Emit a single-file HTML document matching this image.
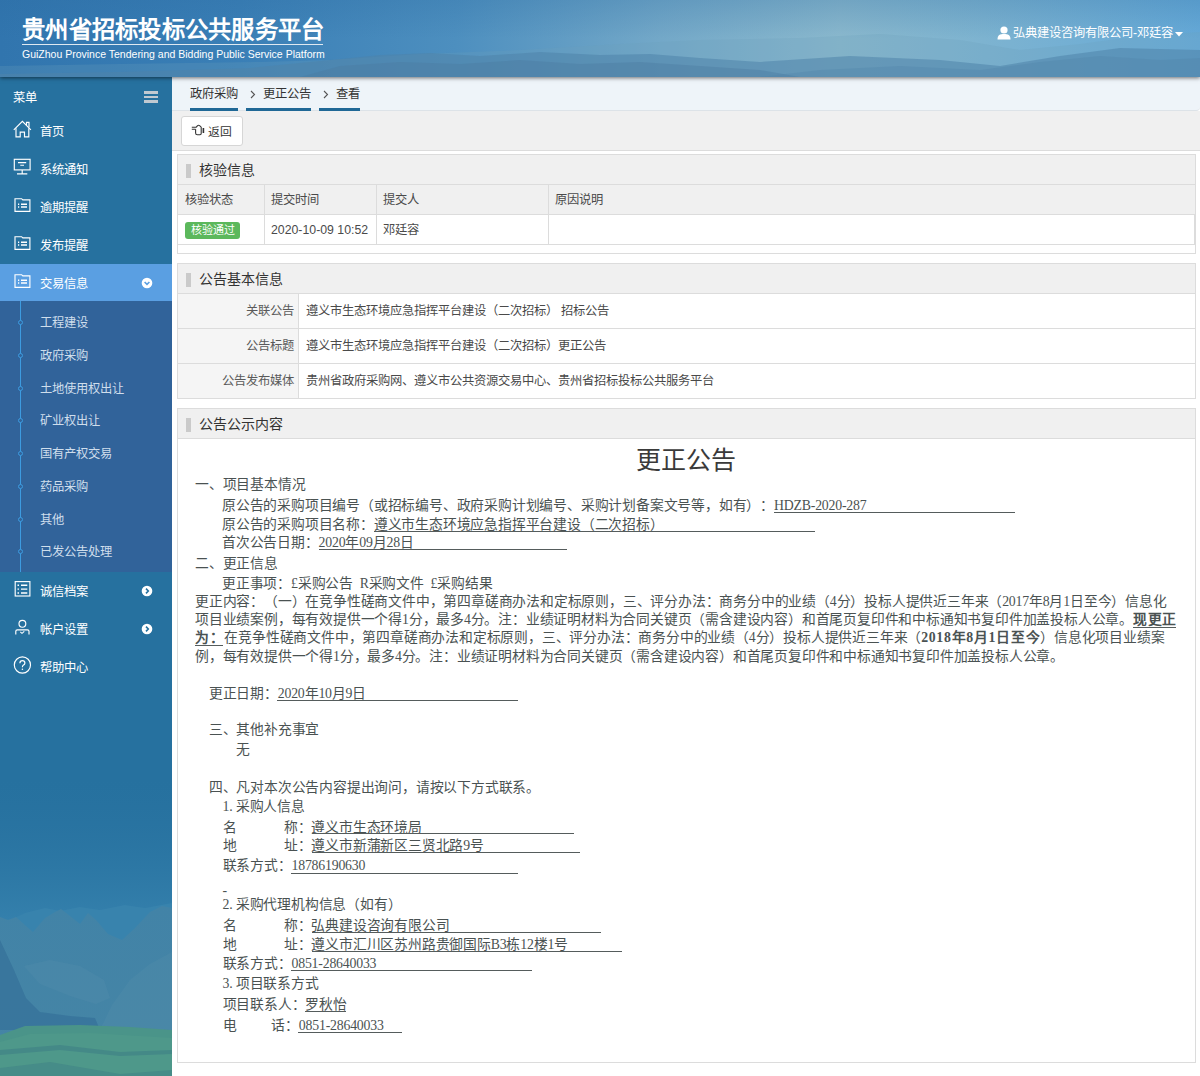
<!DOCTYPE html><html lang="zh-CN"><head><meta charset="utf-8">
<style>
*{margin:0;padding:0;box-sizing:border-box}
html,body{width:1200px;height:1076px;overflow:hidden;background:#fff;font-family:"Liberation Sans",sans-serif;text-spacing-trim:space-all;}
.a{position:absolute;white-space:nowrap}
#hdr{position:absolute;left:0;top:0;width:1200px;height:77px;z-index:5;box-shadow:0 1px 4px rgba(0,0,0,0.55);
 background:linear-gradient(90deg,#2f78b4 0%,#3a80b8 22%,#6aa2c4 42%,#86b5cb 58%,#8fbacd 63%,#74acd0 80%,#62a4d4 100%);}
#hdr .ttl{left:22px;top:15px;color:#fff;font-size:23.3px;letter-spacing:0.25px;font-weight:bold;line-height:30px}
#hdr .line{position:absolute;left:22px;top:44px;width:301px;height:1px;background:#dfe9f1}
#hdr .sub{left:22px;top:47px;color:#fff;font-size:10.5px;line-height:14px}
#hdr .user{left:1013px;top:25px;color:#fff;font-size:12.3px;line-height:17px}
#side{position:absolute;left:0;top:77px;width:172px;height:999px;background:#26719f;overflow:hidden}
#side .t{position:absolute;color:#fff;font-size:12.3px;line-height:16px;white-space:nowrap;margin-top:1.5px}
#side .ic{position:absolute;left:14px;width:17px;height:17px}
#sub{position:absolute;left:0;top:224px;width:172px;height:271px;background:#31639a}
#sub .vl{position:absolute;left:20px;top:0;width:1px;height:271px;background:#3d9be0}
#sub .dot{position:absolute;left:18px;width:5px;height:5px;margin-top:1px;border:1px solid #3d9be0;border-radius:50%;background:#31639a}
#sub .t{color:#cfdeec;font-size:12.3px;left:40px;margin-top:0.5px}
.arr{position:absolute;left:141px;width:11px;height:11px;border-radius:50%;background:#fff}
#main{position:absolute;left:172px;top:77px;width:1028px;height:999px;background:#fff}
#bc{position:absolute;left:0;top:0;width:1028px;height:34px;background:#eef4f9;border-bottom:1px solid #dde3e8;border-bottom-right-radius:4px}
#bc .t{position:absolute;top:9px;font-size:12.3px;line-height:17px;color:#333;white-space:nowrap}
#bc .u{position:absolute;top:31px;height:3px;background:#1f6896}
#tb{position:absolute;left:0;top:34px;width:1028px;height:40px;background:#f0f0f0;border-bottom:1px solid #dcdcdc}
.btn{position:absolute;left:9px;top:5px;width:62px;height:30px;background:#fff;border:1px solid #d6d6d6;border-radius:3px}
.panel{position:absolute;left:5px;width:1019px;border:1px solid #dcdcdc;background:#fff}
.ph{position:absolute;left:0;top:0;width:1017px;height:30px;background:#f0f0f0;border-bottom:1px solid #dcdcdc;font-size:14px;color:#333}
.ph:before{content:"";position:absolute;left:8px;top:9px;width:5px;height:14px;background:#cacaca}
.ph span{position:absolute;left:21px;top:6px;line-height:18px;white-space:nowrap}
.cell{position:absolute;font-size:12.3px;line-height:16px;color:#4a4a4a;white-space:nowrap}
#ct{position:absolute;left:0;top:0;width:1200px;height:1076px;font-family:"Liberation Sans",sans-serif;color:#4a5252;font-size:13.8px;line-height:18px}
#ct .a{position:absolute;white-space:nowrap}
#ct .l{font-size:13.8px;line-height:18px;letter-spacing:-0.2px}
#ct b{font-weight:bold;letter-spacing:0.7px}
#ct .s{font-family:"Liberation Serif",serif}
</style></head><body>
<div id="hdr">
 <svg class="a" style="left:0;top:0" width="1200" height="77" viewBox="0 0 1200 77">
  <defs>
   <linearGradient id="hg" x1="0" y1="0" x2="1" y2="0">
    <stop offset="0" stop-color="#3175ae"></stop><stop offset="0.2" stop-color="#3a7fb6"></stop><stop offset="0.38" stop-color="#4d8fbf"></stop>
    <stop offset="0.55" stop-color="#73a8c8"></stop><stop offset="0.7" stop-color="#8ab8cd"></stop><stop offset="0.82" stop-color="#7db3d0"></stop><stop offset="1" stop-color="#66aad8"></stop>
   </linearGradient>
   <linearGradient id="hv" x1="0" y1="0" x2="0" y2="1"><stop offset="0" stop-color="#2a6aa0" stop-opacity="0.25"></stop><stop offset="0.5" stop-color="#2a6aa0" stop-opacity="0"></stop></linearGradient>
  </defs>
  <rect width="1200" height="77" fill="url(#hg)"></rect>
  <rect width="1200" height="77" fill="url(#hv)"></rect>
  <path d="M0 77 V66 L120 64 L260 62 L330 60 L420 54 L520 50 L620 44 L700 40 L800 38 L880 34 L960 40 L1020 50 L1080 44 L1140 36 L1200 32 V77Z" fill="#6a9fbd" opacity="0.25"></path>
  <path d="M0 77 V74 L120 72 L250 68 L330 60 L380 55 L430 53 L480 56 L540 52 L600 55 L650 54 L700 58 L760 62 L850 56 L940 60 L1000 66 L1060 56 L1120 48 L1200 50 V77Z" fill="#4f84a9" opacity="0.55"></path>
  <path d="M300 77 L340 66 L400 62 L460 64 L520 60 L580 64 L640 62 L700 66 L760 70 L800 77Z" fill="#4a7b9f" opacity="0.4"></path>
  <path d="M760 77 L820 70 L900 66 L980 70 L1040 62 L1100 56 L1160 60 L1200 58 V77Z" fill="#4f84a9" opacity="0.35"></path>
 </svg>
 <div class="a ttl" style="width: 302.25px; text-align-last: justify;">贵州省招标投标公共服务平台</div>
 <div class="line"></div>
 <div class="a sub">GuiZhou Province Tendering and Bidding Public Service Platform</div>
 <svg class="a" style="left:997px;top:26px" width="14" height="14" viewBox="0 0 14 14"><circle cx="7" cy="4" r="3.6" fill="#fff"></circle><path d="M0.5 13.5 C0.5 9 3 8 7 8 C11 8 13.5 9 13.5 13.5Z" fill="#fff"></path></svg>
 <div class="a user" style="width: 160.109px; text-align-last: justify;">弘典建设咨询有限公司-邓廷容</div>
 <svg class="a" style="left:1175px;top:32px" width="8" height="5" viewBox="0 0 8 5"><path d="M0 0H8L4 4.5Z" fill="#fff"></path></svg>
</div>
<div id="side">
<svg class="a" style="left:0;top:703px" width="172" height="296" viewBox="0 0 172 296">
  <defs>
   <linearGradient id="hz" x1="0" y1="0" x2="0" y2="1"><stop offset="0" stop-color="#2a74a2" stop-opacity="0"></stop><stop offset="1" stop-color="#3581ad" stop-opacity="1"></stop></linearGradient>
   <linearGradient id="mt" x1="0" y1="0" x2="0" y2="1"><stop offset="0" stop-color="#4283a7"></stop><stop offset="1" stop-color="#4585a5"></stop></linearGradient>
  </defs>
  <rect x="0" y="0" width="172" height="145" fill="url(#hz)"></rect>
  <rect x="0" y="145" width="172" height="151" fill="#3581ad"></rect>
  <path d="M0 145 L10 140 L25 133 L45 128 L60 131 L80 127 L100 130 L125 125 L145 128 L172 123 V296 H0Z" fill="#3883ad"></path>
  <path d="M0 137 L8 140 L16 137 L26 146 L33 152 L45 138 L55 132 L61 129 L70 136 L80 144 L88 133 L96 140 L108 154 L122 160 L135 148 L150 132 L162 126 L172 128 V296 H0Z" fill="url(#mt)"></path>
  <path d="M0 160 L14 190 L26 218 L40 232 L70 236 L95 238 L100 250 H0Z" fill="#36729a" opacity="0.75"></path>
  <path d="M24 186 L40 204 L70 216 L96 224 L110 218 L104 200 L80 186 L50 180Z" fill="#5590ab" opacity="0.3"></path>
  <path d="M100 250 L112 225 L130 200 L150 184 L172 172 V250Z" fill="#5590ab" opacity="0.28"></path>
  <path d="M0 255 L25 246 L80 245 L130 247 L172 250 V296 H0Z" fill="#4a9489"></path>
  <path d="M0 296 L0 262 L30 254 L90 253 L172 258 V296Z" fill="#4e988a"></path>
  <path d="M0 270 L60 265 L120 272 L172 270 V274 L120 276 L60 270 L0 275Z" fill="#3d7f86" opacity="0.6"></path>
  <path d="M0 288 L50 282 L120 294 L172 290 V296 H0Z" fill="#3d7f86" opacity="0.5"></path>
 </svg>
 <div class="t" style="left: 13px; top: 11px; width: 24px; text-align-last: justify;">菜单</div>
 <div class="a" style="left:144px;top:14.2px;width:14px;height:2.6px;background:#c0c9d1"></div>
 <div class="a" style="left:144px;top:18.8px;width:14px;height:2.4px;background:#c0c9d1"></div>
 <div class="a" style="left:144px;top:23px;width:14px;height:2.6px;background:#c0c9d1"></div>

 <div class="a" style="left:0;top:187px;width:172px;height:37px;background:#5a9fe2"></div>
 <svg class="a" style="left:12px;top:43px" width="20" height="18" viewBox="0 0 20 18"><path d="M1.8 9.8 L10.4 1.4 L18.9 9.8" stroke="#fff" stroke-width="1.15" fill="none"></path><path d="M14.5 5.2 V2.3 H17 V7.6" stroke="#fff" stroke-width="1.15" fill="none"></path><path d="M4 8.3 V16.9 H8.2 V12.1 H12.5 V16.9 H16.8 V8.3" stroke="#fff" stroke-width="1.15" fill="none"></path></svg>
 <svg class="a" style="left:13px;top:81px" width="18" height="17" viewBox="0 0 18 17"><rect x="1.3" y="1.3" width="15.8" height="10.6" stroke="#fff" stroke-width="1.15" fill="none"></rect><path d="M5 4.6 H13.2 M7.3 7.2 H11" stroke="#fff" stroke-width="1.15" fill="none"></path><path d="M9.2 12 V15.6 M4 15.8 H14.3" stroke="#fff" stroke-width="1.15" fill="none"></path></svg>
 <svg class="a" style="left:13px;top:120px" width="18" height="16" viewBox="0 0 18 16"><path d="M2 14.3 V1.7 H8.6 L9.8 2.9 H16.9 V14.3 Z" stroke="#fff" stroke-width="1.15" fill="none"></path><path d="M5 7.3 H6.2 M5 10 H6.2 M8 7.3 H14 M8 10 H14" stroke="#fff" stroke-width="1.5"></path></svg>
 <svg class="a" style="left:13px;top:158px" width="18" height="16" viewBox="0 0 18 16"><path d="M2 14.3 V1.7 H8.6 L9.8 2.9 H16.9 V14.3 Z" stroke="#fff" stroke-width="1.15" fill="none"></path><path d="M5 7.3 H6.2 M5 10 H6.2 M8 7.3 H14 M8 10 H14" stroke="#fff" stroke-width="1.5"></path></svg>
 <svg class="a" style="left:13px;top:196px" width="18" height="16" viewBox="0 0 18 16"><path d="M2 14.3 V1.7 H8.6 L9.8 2.9 H16.9 V14.3 Z" stroke="#fff" stroke-width="1.15" fill="none"></path><path d="M5 7.3 H6.2 M5 10 H6.2 M8 7.3 H14 M8 10 H14" stroke="#fff" stroke-width="1.5"></path></svg>
 <svg class="a" style="left:13px;top:503px" width="18" height="17" viewBox="0 0 18 17"><rect x="2.2" y="1.6" width="14.7" height="14.4" stroke="#fff" stroke-width="1.15" fill="none"></rect><path d="M4.5 5.2 H6 M4.5 9.1 H6 M4.5 13 H6 M8 5.2 H14.3 M8 9.1 H14.3 M8 13 H14.3" stroke="#fff" stroke-width="1.4"></path></svg>
 <svg class="a" style="left:13px;top:541px" width="18" height="18" viewBox="0 0 18 18"><circle cx="9.4" cy="5.8" r="3.4" stroke="#fff" stroke-width="1.15" fill="none"></circle><path d="M2.8 16.5 V13.3 Q2.8 11.8 4.3 11.8 H14.5 Q16 11.8 16 13.3 V16.5" stroke="#fff" stroke-width="1.15" fill="none"></path><path d="M7.3 13.8 L9 15.3 L11.3 13.3" stroke="#fff" stroke-width="1.1" fill="none"></path></svg>
 <svg class="a" style="left:13px;top:579px" width="19" height="19" viewBox="0 0 19 19"><circle cx="9.4" cy="9" r="8.1" stroke="#fff" stroke-width="1.15" fill="none"></circle><path d="M6.9 7.2 Q6.9 4.6 9.4 4.6 Q11.9 4.6 11.9 6.9 Q11.9 8.4 10.2 9.3 Q9.4 9.8 9.4 11.2" stroke="#fff" stroke-width="1.2" fill="none"></path><circle cx="9.4" cy="13.3" r="0.8" fill="#fff"></circle></svg>
 <div class="t" style="left: 40px; top: 45px; width: 24px; text-align-last: justify;">首页</div>
 <div class="t" style="left: 40px; top: 83px; width: 48px; text-align-last: justify;">系统通知</div>
 <div class="t" style="left: 40px; top: 121px; width: 48px; text-align-last: justify;">逾期提醒</div>
 <div class="t" style="left: 40px; top: 159px; width: 48px; text-align-last: justify;">发布提醒</div>
 <div class="t" style="left: 40px; top: 197px; width: 48px; text-align-last: justify;">交易信息</div>
 <svg class="a" style="left:141px;top:200px" width="12" height="12" viewBox="0 0 12 12"><circle cx="6" cy="6" r="5.3" fill="#fff"></circle><path d="M3.6 5 L6 7.3 L8.4 5" stroke="#5a9fe2" stroke-width="1.6" fill="none"></path></svg>
 <div id="sub">
  <div class="vl"></div>
  <div class="dot" style="top:17.8px"></div>
  <div class="t" style="top: 13.3px; width: 48px; text-align-last: justify;">工程建设</div>
  <div class="dot" style="top:50.9px"></div>
  <div class="t" style="top: 46.4px; width: 48px; text-align-last: justify;">政府采购</div>
  <div class="dot" style="top:83.8px"></div>
  <div class="t" style="top: 79.3px; width: 84px; text-align-last: justify;">土地使用权出让</div>
  <div class="dot" style="top:116.3px"></div>
  <div class="t" style="top: 111.8px; width: 60px; text-align-last: justify;">矿业权出让</div>
  <div class="dot" style="top:148.8px"></div>
  <div class="t" style="top: 144.3px; width: 72px; text-align-last: justify;">国有产权交易</div>
  <div class="dot" style="top:181.5px"></div>
  <div class="t" style="top: 177px; width: 48px; text-align-last: justify;">药品采购</div>
  <div class="dot" style="top:214.6px"></div>
  <div class="t" style="top: 210.1px; width: 24px; text-align-last: justify;">其他</div>
  <div class="dot" style="top:247.3px"></div>
  <div class="t" style="top: 242.8px; width: 72px; text-align-last: justify;">已发公告处理</div>
 </div>
 <div class="t" style="left: 40px; top: 505px; width: 48px; text-align-last: justify;">诚信档案</div>
 <svg class="a" style="left:141px;top:508px" width="12" height="12" viewBox="0 0 12 12"><circle cx="6" cy="6" r="5.3" fill="#fff"></circle><path d="M5 3.6 L7.3 6 L5 8.4" stroke="#26719f" stroke-width="1.6" fill="none"></path></svg>
 <div class="t" style="left: 40px; top: 543px; width: 48px; text-align-last: justify;">帐户设置</div>
 <svg class="a" style="left:141px;top:546px" width="12" height="12" viewBox="0 0 12 12"><circle cx="6" cy="6" r="5.3" fill="#fff"></circle><path d="M5 3.6 L7.3 6 L5 8.4" stroke="#26719f" stroke-width="1.6" fill="none"></path></svg>
 <div class="t" style="left: 40px; top: 581px; width: 48px; text-align-last: justify;">帮助中心</div>
</div>
<div id="main">
 <div id="bc">
  <div class="t" style="left: 18px; width: 48px; text-align-last: justify;">政府采购</div>
  <svg class="a" style="left:78px;top:13px" width="6" height="9" viewBox="0 0 6 9"><path d="M1 1 L4.5 4.5 L1 8" stroke="#555" stroke-width="1.1" fill="none"></path></svg>
  <div class="t" style="left: 91px; width: 48px; text-align-last: justify;">更正公告</div>
  <svg class="a" style="left:151px;top:13px" width="6" height="9" viewBox="0 0 6 9"><path d="M1 1 L4.5 4.5 L1 8" stroke="#555" stroke-width="1.1" fill="none"></path></svg>
  <div class="t" style="left: 164px; width: 24px; text-align-last: justify;">查看</div>
  <div class="u" style="left:18px;width:48px"></div>
  <div class="u" style="left:74px;width:65px"></div>
  <div class="u" style="left:147px;width:41px"></div>
 </div>
 <div id="tb"><div class="btn"></div>
  <svg class="a" style="left:19px;top:13px" width="14" height="12" viewBox="0 0 14 12"><path d="M0.8 3.2 H5.2 L6.6 1.6 Q7.6 0.8 8.6 1.6 L10.2 3.2 V9.6 Q10.2 10.8 9 10.8 H6.4 Q4.6 10.8 4.6 9 V5.2 M4.6 5.2 H0.8 Z" stroke="#333" stroke-width="1.1" fill="none"></path><rect x="11.6" y="4" width="1.6" height="5" fill="#333"></rect></svg>
  <div class="a" style="left: 36px; top: 13px; font-size: 11.8px; line-height: 16px; color: rgb(51, 51, 51); width: 24px; text-align-last: justify;">返回</div></div>
 <div class="panel" style="top:77px;height:100px"><div class="ph"><span style="width: 56px; text-align-last: justify;">核验信息</span></div>
  <div class="a" style="left:0;top:30px;width:1017px;height:30px;background:#f0f0f0;border-bottom:1px solid #dcdcdc"></div>
  <div class="a" style="left:0;top:60px;width:1017px;height:30px;background:#fff;border-bottom:1px solid #dcdcdc;border-right:1px solid #dcdcdc"></div>
  <div class="a" style="left:86px;top:30px;width:1px;height:60px;background:#dcdcdc"></div>
  <div class="a" style="left:198px;top:30px;width:1px;height:60px;background:#dcdcdc"></div>
  <div class="a" style="left:370px;top:30px;width:1px;height:60px;background:#dcdcdc"></div>
  <div class="cell" style="left: 7px; top: 37px; width: 48px; text-align-last: justify;">核验状态</div>
  <div class="cell" style="left: 93px; top: 37px; width: 48px; text-align-last: justify;">提交时间</div>
  <div class="cell" style="left: 205px; top: 37px; width: 36px; text-align-last: justify;">提交人</div>
  <div class="cell" style="left: 377px; top: 37px; width: 48px; text-align-last: justify;">原因说明</div>
  <div class="a" style="left:7px;top:67px;width:55px;height:17px;background:#5cb85c;border-radius:3px;color:#fff;font-size:11px;line-height:17px;text-align:center">核验通过</div>
  <div class="cell" style="left:93px;top:67px;font-size:12.3px">2020-10-09 10:52</div>
  <div class="cell" style="left: 205px; top: 67px; width: 36px; text-align-last: justify;">邓廷容</div>
 </div>
 <div class="panel" style="top:186px;height:136px"><div class="ph"><span style="width: 84px; text-align-last: justify;">公告基本信息</span></div>
  <div class="a" style="left:0;top:30px;width:121px;height:104px;background:#f5f5f5;border-right:1px solid #dcdcdc"></div>
  <div class="a" style="left:0;top:64px;width:1017px;height:1px;background:#dcdcdc"></div>
  <div class="a" style="left:0;top:99px;width:1017px;height:1px;background:#dcdcdc"></div>
  <div class="cell" style="left: 0px; width: 116px; text-align: right; top: 39px; color: rgb(90, 90, 90); padding-left: 68px; text-align-last: justify;">关联公告</div>
  <div class="cell" style="left: 0px; width: 116px; text-align: right; top: 74px; color: rgb(90, 90, 90); padding-left: 68px; text-align-last: justify;">公告标题</div>
  <div class="cell" style="left: 0px; width: 116px; text-align: right; top: 109px; color: rgb(90, 90, 90); padding-left: 44px; text-align-last: justify;">公告发布媒体</div>
  <div class="cell" style="left: 128px; top: 39px; width: 303.422px; text-align-last: justify;">遵义市生态环境应急指挥平台建设（二次招标） 招标公告</div>
  <div class="cell" style="left: 128px; top: 74px; width: 300px; text-align-last: justify;">遵义市生态环境应急指挥平台建设（二次招标）更正公告</div>
  <div class="cell" style="left: 128px; top: 109px; width: 408px; text-align-last: justify;">贵州省政府采购网、遵义市公共资源交易中心、贵州省招标投标公共服务平台</div>
 </div>
 <div class="panel" style="top:331px;height:655px"><div class="ph"><span style="width: 84px; text-align-last: justify;">公告公示内容</span></div></div>
</div>
<div id="ct">
<div class="a" style="left: 636px; top: 445px; font-size: 25px; line-height: 30px; color: rgb(58, 58, 58); width: 100px; text-align-last: justify;">更正公告</div>
<div class="a l" style="left: 195px; top: 476px; width: 110.406px; text-align-last: justify;">一、项目基本情况</div>
<div class="a l" style="left: 222px; top: 496.75px; width: 644.453px; text-align-last: justify;">原公告的采购项目编号（或招标编号、政府采购计划编号、采购计划备案文号等，如有）：<span class="s">HDZB-2020-287</span></div>
<div class="a" style="left:774px;top:511.5px;width:241px;height:1px;background:#555c5c"></div>
<div class="a l" style="left: 222px; top: 515.5px; width: 441.609px; text-align-last: justify;">原公告的采购项目名称：遵义市生态环境应急指挥平台建设（二次招标）</div>
<div class="a" style="left:374px;top:530.5px;width:441px;height:1px;background:#555c5c"></div>
<div class="a l" style="left: 222px; top: 534px; width: 191.656px; text-align-last: justify;">首次公告日期：<span class="s">2020</span>年<span class="s">09</span>月<span class="s">28</span>日</div>
<div class="a" style="left:319px;top:548.5px;width:248px;height:1px;background:#555c5c"></div>
<div class="a l" style="left: 195px; top: 554.75px; width: 82.8125px; text-align-last: justify;">二、更正信息</div>
<div class="a l" style="left: 222px; top: 574.75px; width: 270.453px; text-align-last: justify;">更正事项：<span class="s">£</span>采购公告 <span class="s">R</span>采购文件 <span class="s">£</span>采购结果</div>
<div class="a l" style="left: 195px; top: 593px; width: 971.562px; text-align-last: justify;">更正内容：（一）在竞争性磋商文件中，第四章磋商办法和定标原则，三、评分办法：商务分中的业绩（<span class="s">4</span>分）投标人提供近三年来（<span class="s">2017</span>年<span class="s">8</span>月<span class="s">1</span>日至今）信息化</div>
<div class="a l" style="left: 195px; top: 611px; width: 982.141px; text-align-last: justify;">项目业绩案例，每有效提供一个得<span class="s">1</span>分，最多<span class="s">4</span>分。注：业绩证明材料为合同关键页（需含建设内容）和首尾页复印件和中标通知书复印件加盖投标人公章。<b>现更正</b></div>
<div class="a" style="left:1133px;top:626.5px;width:43px;height:1px;background:#555c5c"></div>
<div class="a l" style="left: 195px; top: 629px; width: 969.469px; text-align-last: justify;"><b>为：</b>在竞争性磋商文件中，第四章磋商办法和定标原则，三、评分办法：商务分中的业绩（<span class="s">4</span>分）投标人提供近三年来（<b><span class="s">2018</span>年<span class="s">8</span>月<span class="s">1</span>日至今</b>）信息化项目业绩案</div>
<div class="a" style="left:195px;top:644.5px;width:28px;height:1px;background:#555c5c"></div>
<div class="a l" style="left: 195px; top: 647.5px; width: 869.031px; text-align-last: justify;">例，每有效提供一个得<span class="s">1</span>分，最多<span class="s">4</span>分。注：业绩证明材料为合同关键页（需含建设内容）和首尾页复印件和中标通知书复印件加盖投标人公章。</div>
<div class="a l" style="left: 208.75px; top: 684.75px; width: 157.359px; text-align-last: justify;">更正日期：<span class="s">2020</span>年<span class="s">10</span>月<span class="s">9</span>日</div>
<div class="a" style="left:277px;top:700.0px;width:241px;height:1px;background:#555c5c"></div>
<div class="a l" style="left: 208.75px; top: 721px; width: 110.406px; text-align-last: justify;">三、其他补充事宜</div>
<div class="a l" style="left:236px;top:741.00px">无</div>
<div class="a l" style="left: 208.75px; top: 778.5px; width: 331.203px; text-align-last: justify;">四、凡对本次公告内容提出询问，请按以下方式联系。</div>
<div class="a l" style="left: 222.5px; top: 798px; width: 82.375px; text-align-last: justify;"><span class="s">1</span><span style="letter-spacing:3.2px"><span class="s">.</span></span>采购人信息</div>
<div class="a l" style="left:222.5px;top:818.50px">名</div>
<div class="a l" style="left: 283.75px; top: 818.5px; width: 138.016px; text-align-last: justify;">称：遵义市生态环境局</div>
<div class="a" style="left:312px;top:833.0px;width:262px;height:1px;background:#555c5c"></div>
<div class="a l" style="left:222.5px;top:837.00px">地</div>
<div class="a l" style="left: 283.75px; top: 837px; width: 199.922px; text-align-last: justify;">址：遵义市新蒲新区三贤北路<span class="s">9</span>号</div>
<div class="a" style="left:312px;top:852.0px;width:268px;height:1px;background:#555c5c"></div>
<div class="a l" style="left: 222.5px; top: 857px; width: 142.703px; text-align-last: justify;">联系方式：<span class="s">18786190630</span></div>
<div class="a" style="left:291px;top:872.5px;width:227px;height:1px;background:#555c5c"></div>
<div class="a l" style="left:222.5px;top:881.50px"><span class="s">-</span></div>
<div class="a l" style="left: 222.5px; top: 896px; width: 178.969px; text-align-last: justify;"><span class="s">2</span><span style="letter-spacing:3.2px"><span class="s">.</span></span>采购代理机构信息（如有）</div>
<div class="a l" style="left:222.5px;top:917.00px">名</div>
<div class="a l" style="left: 283.75px; top: 917px; width: 165.609px; text-align-last: justify;">称：弘典建设咨询有限公司</div>
<div class="a" style="left:312px;top:932.0px;width:289px;height:1px;background:#555c5c"></div>
<div class="a l" style="left:222.5px;top:936.00px">地</div>
<div class="a l" style="left: 283.75px; top: 936px; width: 284.266px; text-align-last: justify;">址：遵义市汇川区苏州路贵御国际<span class="s">B3</span>栋<span class="s">12</span>楼<span class="s">1</span>号</div>
<div class="a" style="left:312px;top:951.0px;width:310px;height:1px;background:#555c5c"></div>
<div class="a l" style="left: 222.5px; top: 954.75px; width: 153.797px; text-align-last: justify;">联系方式：<span class="s">0851-28640033</span></div>
<div class="a" style="left:291px;top:970.0px;width:241px;height:1px;background:#555c5c"></div>
<div class="a l" style="left: 222.5px; top: 974.75px; width: 96.1719px; text-align-last: justify;"><span class="s">3</span><span style="letter-spacing:3.2px"><span class="s">.</span></span>项目联系方式</div>
<div class="a l" style="left: 222.5px; top: 996px; width: 124.203px; text-align-last: justify;">项目联系人：罗秋怡</div>
<div class="a" style="left:305px;top:1011.0px;width:41px;height:1px;background:#555c5c"></div>
<div class="a l" style="left:222.5px;top:1017.25px">电</div>
<div class="a l" style="left: 271.25px; top: 1017.25px; width: 112.391px; text-align-last: justify;">话：<span class="s">0851-28640033</span></div>
<div class="a" style="left:298px;top:1032.0px;width:104px;height:1px;background:#555c5c"></div>
</div>

</body></html>
